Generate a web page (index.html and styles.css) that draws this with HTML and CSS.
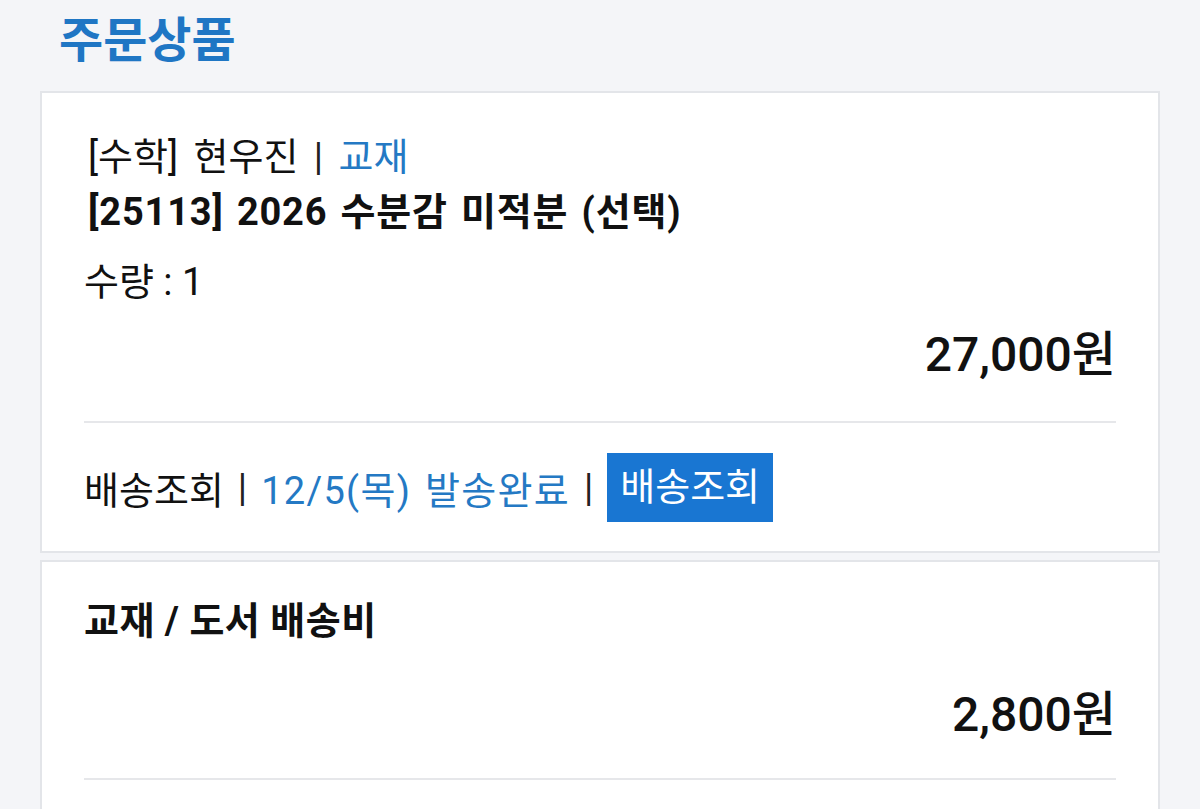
FILE: index.html
```html
<!DOCTYPE html>
<html lang="ko">
<head>
    <meta charset="UTF-8" />
    <title>주문상품</title>
    <link rel="stylesheet" href="styles.css">
</head>
<body>
    <div class="page">
        <h1 class="page-title">주문상품</h1>

        <div class="card">
            <div class="item-info">
                <p class="item-meta">[수학] 현우진 <span class="bar">|</span> <span class="blue">교재</span></p>
                <p class="item-name">[25113] 2026 수분감 미적분 (선택)</p>
                <p class="item-qty">수량 : 1</p>
                <p class="price">27,000원</p>
            </div>
            <div class="delivery">
                <span>배송조회</span>
                <span class="bar">|</span>
                <span class="blue">12/5(목) 발송완료</span>
                <span class="bar">|</span>
                <a class="track-btn">배송조회</a>
            </div>
        </div>

        <div class="card fee-card">
            <div class="item-info">
                <p class="fee-title">교재 / 도서 배송비</p>
                <p class="price fee-price">2,800원</p>
            </div>
        </div>
    </div>
</body>
</html>
```

FILE: styles.css
```css
* {
    box-sizing: border-box;
    margin: 0;
    padding: 0;
}

body {
    font-family: Roboto, "Noto Sans CJK KR", sans-serif;
    background-color: #f4f5f8;
    color: #111;
    height: 809px;
    overflow: hidden;
}

.page {
    padding: 0 40px;
}

.page-title {
    font-family: "Noto Sans CJK KR", sans-serif;
    font-size: 48px;
    font-weight: 700;
    color: #1f76c4;
    line-height: 72px;
    padding-left: 19px;
    margin-bottom: 19px;
}

.card {
    background-color: #fff;
    border: 2px solid #e3e5e9;
    padding: 0 42px;
    margin-bottom: 7px;
}

.item-info {
    padding-top: 37px;
    padding-bottom: 39px;
    border-bottom: 2px solid #e6e7ea;
}

.item-meta,
.item-name,
.item-qty,
.fee-title {
    font-size: 38px;
    line-height: 55px;
}

.item-meta {
    padding-left: 4px;
    word-spacing: 6px;
}

.item-name {
    font-weight: 700;
    padding-left: 4px;
    word-spacing: 3px;
    letter-spacing: 0.8px;
}

.item-qty {
    margin-top: 15px;
}

.price {
    font-size: 48px;
    font-weight: 500;
    line-height: 55px;
    text-align: right;
    margin-top: 17px;
}

.fee-card {
    padding-bottom: 60px;
}

.fee-card .item-info {
    padding-top: 32px;
    padding-bottom: 36px;
}

.fee-title {
    font-weight: 700;
    letter-spacing: 0.5px;
}

.fee-price {
    margin-top: 38px;
}

.bar {
    color: #222;
}

.blue {
    color: #2479c4;
}

.delivery {
    display: flex;
    align-items: center;
    gap: 14px;
    font-size: 38px;
    padding: 30px 0 29px;
}

.delivery .blue {
    word-spacing: 3px;
    letter-spacing: 1.3px;
}

.track-btn {
    background-color: #1976d2;
    color: #fff;
    padding: 0 13px;
    line-height: 69px;
}
```
